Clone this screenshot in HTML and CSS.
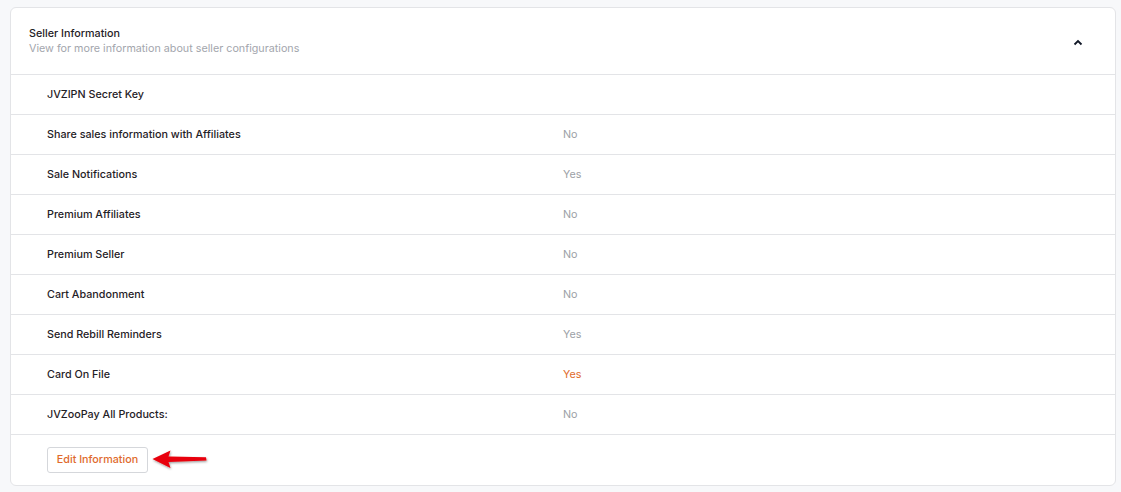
FILE: index.html
```html
<!DOCTYPE html>
<html>
<head>
<meta charset="utf-8">
<link rel="stylesheet" href="styles.css">
</head>
<body>
<div class="card">
  <div class="card-header">
    <div class="titles">
      <div class="title">Seller Information</div>
      <div class="subtitle">View for more information about seller configurations</div>
    </div>
    <svg class="chev" width="10" height="7" viewBox="0 0 10 7"><path d="M1.5 5.5 L5 2 L8.5 5.5" fill="none" stroke="#111827" stroke-width="1.8"/></svg>
  </div>
  <div class="row"><div class="label">JVZIPN Secret Key</div><div class="value"></div></div>
  <div class="row"><div class="label">Share sales information with Affiliates</div><div class="value">No</div></div>
  <div class="row"><div class="label">Sale Notifications</div><div class="value">Yes</div></div>
  <div class="row"><div class="label">Premium Affiliates</div><div class="value">No</div></div>
  <div class="row"><div class="label">Premium Seller</div><div class="value">No</div></div>
  <div class="row"><div class="label">Cart Abandonment</div><div class="value">No</div></div>
  <div class="row"><div class="label">Send Rebill Reminders</div><div class="value">Yes</div></div>
  <div class="row"><div class="label">Card On File</div><div class="value orange">Yes</div></div>
  <div class="row"><div class="label">JVZooPay All Products:</div><div class="value">No</div></div>
  <div class="footer">
    <button class="btn">Edit Information</button>
    <svg class="arrow" width="60" height="24" viewBox="0 0 60 24">
      <defs><filter id="sh" x="-20%" y="-40%" width="140%" height="180%"><feDropShadow dx="0.6" dy="1.2" stdDeviation="1.1" flood-color="#000" flood-opacity="0.4"/></filter></defs>
      <path d="M0.5 11 L18.5 2.5 L16.5 8.5 L54 9.2 L54.5 12.5 L16.5 14 L18.5 20 Z" fill="#e8000b" filter="url(#sh)"/>
    </svg>
  </div>
</div>
</body>
</html>
```
FILE: styles.css
```css
html, body { margin: 0; padding: 0; }
body {
  background: #f7f8fa;
  font-family: Inter, "Noto Sans", sans-serif;
  font-size: 10.75px;
  color: #1f2126;
  padding: 7px 5px 6px 10px;
  height: 492px;
  box-sizing: border-box;
}
.card {
  background: #fff;
  border: 1px solid #e3e4e7;
  border-radius: 6px;
  width: 1106px;
  box-sizing: border-box;
}
.card-header {
  display: flex;
  align-items: center;
  justify-content: space-between;
  height: 67px;
  padding: 0 32px 0 18px;
  border-bottom: 1px solid #e3e4e7;
  box-sizing: border-box;
}
.titles { margin-top: 0; }
.title { font-size: 10.75px; font-weight: 500; color: #1f2126; line-height: 15px; }
.subtitle { font-size: 10.75px; font-weight: 400; color: #a3a6ad; line-height: 15px; }
.chev { margin-top: 2px; }
.row {
  display: grid;
  grid-template-columns: 516px 1fr;
  height: 40px;
  align-items: center;
  padding-left: 36px;
  padding-bottom: 1px;
  border-bottom: 1px solid #e3e4e7;
  box-sizing: border-box;
}
.label { font-weight: 500; color: #1f2126; }
.value { color: #9c9fa6; }
.value.orange { color: #e06a2c; }
.footer {
  display: flex;
  align-items: center;
  height: 50px;
  padding-left: 36px;
  padding-bottom: 1px;
  box-sizing: border-box;
}
.btn {
  font-family: Inter, "Noto Sans", sans-serif;
  font-size: 10.75px;
  font-weight: 500;
  color: #e06a2c;
  background: #fff;
  border: 1px solid #d5d7db;
  border-radius: 3px;
  width: 101px;
  height: 26px;
  padding: 0;
}
.arrow { margin-left: 4px; }
```
